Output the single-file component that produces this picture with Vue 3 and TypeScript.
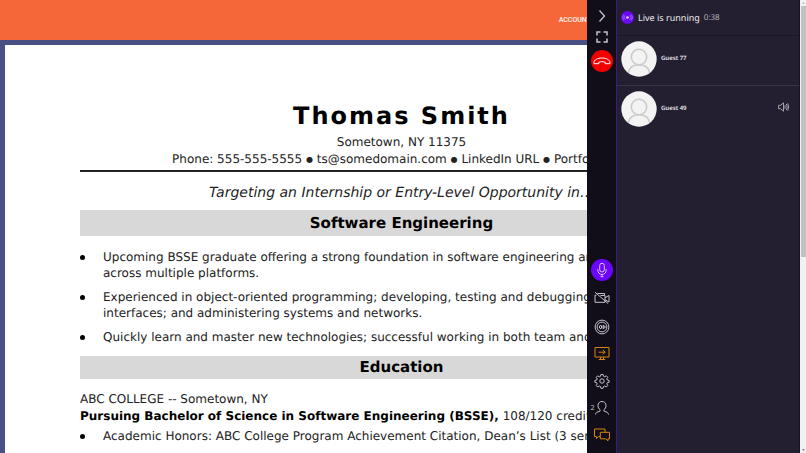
<script setup lang="ts">
import { ref } from 'vue'

interface Guest {
  id: number
  name: string
  speaking: boolean
}

const guests: Guest[] = [
  { id: 77, name: 'Guest 77', speaking: false },
  { id: 49, name: 'Guest 49', speaking: true },
]

const skills: string[][] = [
  [
    'Upcoming BSSE graduate offering a strong foundation in software engineering and programming',
    'across multiple platforms.',
  ],
  [
    'Experienced in object-oriented programming; developing, testing and debugging code;',
    'interfaces; and administering systems and networks.',
  ],
  ['Quickly learn and master new technologies; successful working in both team and self-directed'],
]

const elapsed = ref('0:38')
</script>

<template>
  <div class="app">
    <main class="shared">
      <header class="topbar"><a href="#" class="account">ACCOUNT</a></header>
      <div class="canvas">
        <article class="paper">
          <div class="resume">
            <h1>Thomas Smith</h1>
            <p class="contact">Sometown, NY 11375</p>
            <p class="contact last">Phone: 555-555-5555 <i class="dot">●</i> ts@somedomain.com <i class="dot">●</i> LinkedIn URL <i class="dot">●</i> Portfolio URL</p>
            <p class="target">Targeting an Internship or Entry-Level Opportunity in…</p>
            <h2>Software Engineering</h2>
            <ul class="skills">
              <li v-for="(lines, i) in skills" :key="i">
                <span v-for="line in lines" :key="line" class="line">{{ line }}</span>
              </li>
            </ul>
            <h2 class="short">Education</h2>
            <p class="school">ABC COLLEGE -- Sometown, NY</p>
            <p class="degree"><b>Pursuing Bachelor of Science in Software Engineering (BSSE),</b> 108/120 credits completed</p>
            <ul class="honors">
              <li>Academic Honors: ABC College Program Achievement Citation, Dean’s List (3 semesters)</li>
            </ul>
          </div>
        </article>
      </div>
    </main>

    <nav class="dock" aria-label="Call controls">
      <div class="group">
        <button type="button" aria-label="Collapse">
          <svg class="icon" viewBox="0 0 16 16"><path d="M5.500 2.500l5 5.500-5 5.500" stroke-width="1.300" /></svg>
        </button>
        <button type="button" aria-label="Full screen">
          <svg class="icon thick" viewBox="0 0 16 16"><path d="M6.500 3H3v3.500M9.500 3H13v3.500M6.500 13H3V9.500M9.500 13H13V9.500" /></svg>
        </button>
        <button type="button" class="round hang" aria-label="Hang up">
          <svg class="icon wide" viewBox="0 0 20 16"><path d="M2 9.500C2 7 5.500 5 10 5s8 2 8 4.500v1.200H13.200V9.200C11.500 8.500 8.500 8.500 6.800 9.200v1.500H2z" /></svg>
        </button>
      </div>
      <div class="group lower">
        <button type="button" class="round mic" aria-label="Microphone">
          <svg class="icon" viewBox="0 0 16 16"><rect x="5.700" y="1.300" width="4.600" height="8.700" rx="2.300" /><path d="M3.800 7v1.300a4.200 4.200 0 0 0 8.400 0V7M8 12.500v2.200M6.500 14.700h3" /></svg>
        </button>
        <button type="button" aria-label="Camera off">
          <svg class="icon" viewBox="0 0 16 16"><path d="M3.500 1.500h7v2H11v6.800H1V3.200h1.500M11 5.800l4-2.300v6.500l-4-2.300M1 .2l13.200 11.500M6.500 3.500h4" /></svg>
        </button>
        <button type="button" aria-label="Record">
          <svg class="icon" viewBox="0 0 16 16"><circle cx="8" cy="8" r="6.900" /><circle cx="8" cy="8" r="4.900" /><path d="M5.500 6.800v2.400M7 6.500h-1M7 9.500H6M7.500 6.500v3M9 6.500h1v3H9zM11 7v2" /></svg>
        </button>
        <button type="button" class="amber" aria-label="Share screen">
          <svg class="icon" viewBox="0 0 16 16"><path d="M1 1.500h14v9.500H1zM4.500 6.200h6.500M8.800 3.900l2.300 2.300-2.300 2.300M6.500 11v2.500M9.500 11v2.500M4.800 13.500h6.400" /></svg>
        </button>
        <button type="button" aria-label="Settings">
          <svg class="icon" viewBox="0 0 16 16"><circle cx="8" cy="8" r="2.200" /><path d="M6.900 1.500h2.200l.4 1.800 1.200.5 1.600-1 1.500 1.500-1 1.600.5 1.100 1.800.4v1.900l-1.800.4-.5 1.200 1 1.600-1.500 1.500-1.600-1-1.200.5-.4 1.800H6.900l-.4-1.800-1.200-.5-1.600 1-1.500-1.500 1-1.600-.5-1.200-1.800-.4V7.400l1.800-.4.5-1.100-1-1.600 1.500-1.500 1.600 1 1.200-.5z" /></svg>
        </button>
        <button type="button" aria-label="Participants">
          <svg class="icon" viewBox="0 0 16 16"><path d="M1.500 14.500c.3-2 1.700-2.800 4.300-3.100l.4-1.600C4.700 8.800 4 7.300 4 5.700 4 3 5.700 1.500 8 1.500s4 1.500 4 4.200c0 1.600-.7 3.100-2.200 4.100l.4 1.600c2.600.3 4 1.100 4.300 3.100" /></svg>
          <span class="count">2</span>
        </button>
        <button type="button" class="amber" aria-label="Chat">
          <svg class="icon" viewBox="0 0 16 16"><path d="M6.300 9.500H4.500L2.500 11.500v-2H.5v-7.500h10.500v3.300M6.300 5.300h9.200v6.500H14v2l-2.200-2H6.300z" /></svg>
        </button>
      </div>
    </nav>

    <aside class="panel">
      <div class="status">
        <svg class="live" viewBox="0 0 13 13">
          <circle cx="6.500" cy="6.500" r="6.500" fill="#6a08f5" />
          <circle cx="6.500" cy="6.500" r="1.300" fill="#e4d2ff" />
          <path d="M4.300 4.300a3 3 0 0 0 0 4.400M8.700 4.300a3 3 0 0 1 0 4.400M2.700 3.700a4.600 4.600 0 0 0 0 5.600M10.300 3.700a4.600 4.600 0 0 1 0 5.600" fill="none" stroke="#b383ff" stroke-width=".7" />
        </svg>
        <span>Live is running</span>
        <time>{{ elapsed }}</time>
      </div>
      <ul class="guests">
        <li v-for="guest in guests" :key="guest.id">
          <svg class="avatar" viewBox="0 0 36 36">
            <circle cx="18" cy="18" r="17.700" fill="#f3f3f3" />
            <g fill="none" stroke="#cbcbcb" stroke-width="1.600">
              <circle cx="18" cy="16" r="7.700" />
              <path d="M7.300 32c.8-5 4.800-8.300 10.700-8.300S27.900 27 28.700 32" />
            </g>
          </svg>
          <span class="name">{{ guest.name }}</span>
          <svg v-if="guest.speaking" class="speaker" viewBox="0 0 11 10"><path d="M.6 3.300h2L5.500.8v8.400L2.600 6.700h-2zM7 3.200v3.600M8.300 2c1 1.800 1 4.200 0 6M9.600 1.300c1.200 2.200 1.200 5.200 0 7.400" /></svg>
        </li>
      </ul>
    </aside>

    <div class="scroll" aria-hidden="true">
      <svg viewBox="0 0 6 6"><path d="M1.500 4L3 2l1.500 2z" /></svg>
      <div class="track"><div class="thumb"></div></div>
      <svg class="dark" viewBox="0 0 6 6"><path d="M1.500 2L3 4l1.500-2z" /></svg>
    </div>
  </div>
</template>

<style>
body {
  background: #fff;
  overflow: hidden;
}
</style>

<style scoped>
.app {
  display: grid;
  grid-template-columns: minmax(0, 1fr) 29px 183px 7px;
  height: 100vh;
  font-family: 'DejaVu Sans', sans-serif;
  text-rendering: geometricPrecision;
}
h1, h2, p, ul {
  margin: 0;
  padding: 0;
}
ul {
  list-style: none;
}
.shared {
  display: flex;
  flex-direction: column;
  overflow: hidden;
  background: #474f83;
}
.topbar {
  display: flex;
  flex: none;
  align-items: center;
  height: 40px;
  background: #f56638;
}
.account {
  margin-left: auto;
  margin-right: -4px;
  color: #ffeee8;
  font: 600 7px/10px Roboto, sans-serif;
  text-decoration: none;
}
.canvas {
  flex: 1;
  min-height: 0;
  padding: 5px 0 0 5px;
}
.paper {
  padding: 53px 75px 0;
  background: #fff;
  width: max-content;
  min-height: 100%;
}
.resume {
  width: 643px;
  color: #222;
  font-size: 12px;
  line-height: 17px;
  white-space: nowrap;
}
h1 {
  color: #000;
  font-size: 24px;
  line-height: 36px;
  letter-spacing: 2px;
  text-align: center;
}
.contact {
  text-align: center;
}
.contact.last {
  padding-bottom: 2px;
  border-bottom: 2px solid #222;
}
.dot {
  font-size: 8px;
  font-style: normal;
  line-height: 8px;
  vertical-align: 1px;
}
.target {
  padding: 12px 0 8px;
  font-size: 14px;
  font-style: italic;
  line-height: 18px;
  text-align: center;
}
h2 {
  background: #d8d8d8;
  color: #000;
  font-size: 15px;
  line-height: 26px;
  text-align: center;
}
h2.short {
  line-height: 23px;
}
.skills {
  display: grid;
  gap: 8px;
  padding: 13px 0 11px;
  line-height: 16px;
}
li {
  position: relative;
}
.resume li {
  padding-left: 23px;
}
.resume li::before {
  content: '';
  position: absolute;
  left: 0;
  top: 6px;
  width: 5px;
  height: 5px;
  border-radius: 50%;
  background: #000;
}
.line {
  display: block;
}
.school {
  padding-top: 12px;
}
.degree b {
  color: #000;
}
.honors {
  padding-top: 3px;
}
.dock {
  display: flex;
  flex-direction: column;
  justify-content: space-between;
  padding: 8px 0 10px;
  background: #120e19;
}
.group {
  display: flex;
  flex-direction: column;
  align-items: center;
  gap: 5px;
}
.lower {
  gap: 11px;
}
button {
  position: relative;
  display: flex;
  align-items: center;
  justify-content: center;
  width: 22px;
  height: 16px;
  padding: 0;
  border: 0;
  background: none;
  color: #c4c2ca;
}
.round {
  height: 22px;
  border-radius: 50%;
  color: #fff;
}
.hang {
  background: #f20000;
}
.mic {
  background: #6c05fb;
  color: #dcc3ff;
}
.amber {
  color: #d6850d;
}
.icon {
  flex: none;
  width: 16px;
  height: 16px;
  fill: none;
  stroke: currentColor;
  stroke-width: 1;
}
.thick {
  stroke-width: 1.5;
}
.wide {
  width: 20px;
}
.count {
  position: absolute;
  left: 0;
  top: 4px;
  color: #c4c2ca;
  font: 7px/8px 'Noto Sans', sans-serif;
}
.panel {
  border-left: 1px solid #3f1a85;
  background: #241f30;
  color: #eeedf1;
  font-family: 'Noto Sans', sans-serif;
}
.status {
  display: flex;
  align-items: center;
  gap: 4px;
  height: 36px;
  padding: 0 4px;
  box-sizing: border-box;
  border-bottom: 1px solid #1c1726;
  font-size: 9px;
  line-height: 12px;
}
.live {
  width: 13px;
  height: 13px;
}
time {
  color: #b7b5bd;
  font-size: 8px;
}
.guests li {
  display: flex;
  align-items: center;
  gap: 4px;
  height: 46px;
  padding: 0 10px 3px 4px;
}
.guests li + li {
  border-top: 1px solid #393342;
}
.avatar {
  width: 36px;
  height: 36px;
}
.name {
  padding-bottom: 2px;
  font-size: 6px;
  font-weight: 600;
  line-height: 8px;
}
.speaker {
  width: 11px;
  height: 10px;
  padding-bottom: 4px;
  margin-left: auto;
  fill: none;
  stroke: #c4c2ca;
  stroke-width: 0.8;
}
.scroll {
  display: flex;
  flex-direction: column;
  padding-left: 1px;
  background: #f1f1f1;
  border-left: 1px solid #17131f;
}
.scroll svg {
  flex: none;
  height: 6px;
  fill: #a3a3a3;
}
.scroll .dark {
  fill: #505050;
}
.track {
  flex: 1;
}
.thumb {
  height: 57%;
  background: #c1c1c1;
}
</style>
